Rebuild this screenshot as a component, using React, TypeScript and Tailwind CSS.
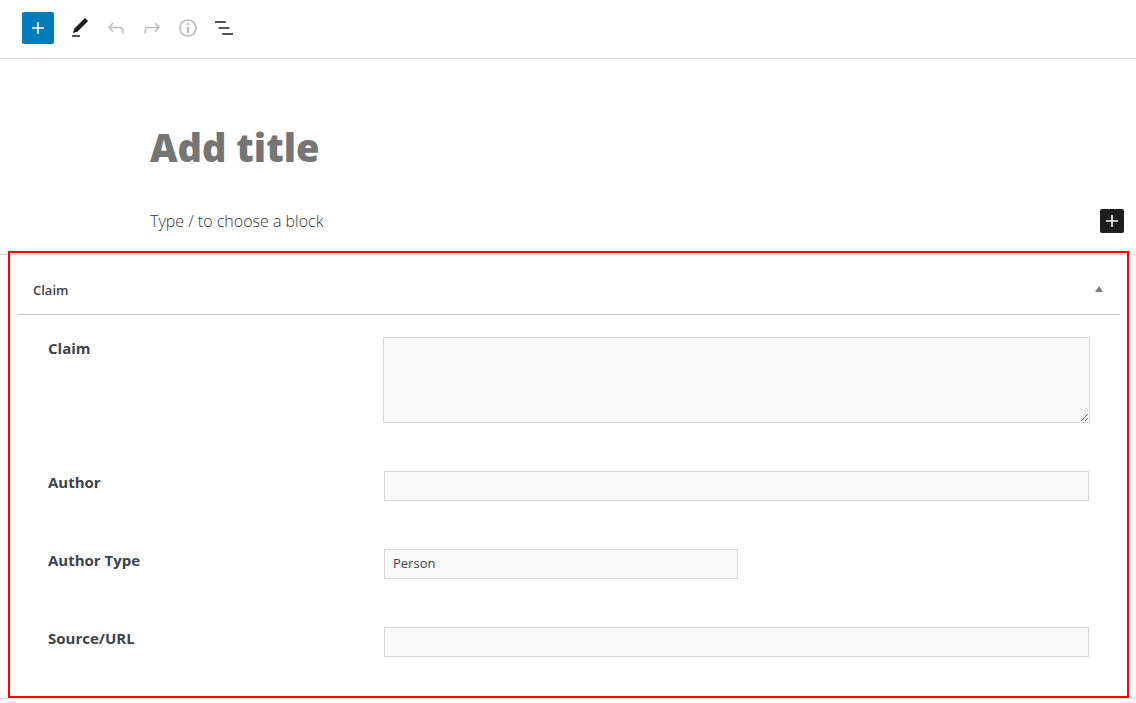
import type { ReactNode } from "react";

function Icon({ d }: { d: string }) {
  return (
    <svg viewBox="0 0 24 24" className="size-6 shrink-0 fill-current" aria-hidden="true">
      <path d={d} />
    </svg>
  );
}

const icons = {
  plus: "M18 11.2h-5.2V6h-1.6v5.2H6v1.6h5.2V18h1.6v-5.2H18z",
  edit: "M20.1 5.1L16.9 2 6.2 12.7l-1.3 4.4 4.5-1.3L20.1 5.1zM4 20.8h8v-1.5H4v1.5z",
  undo: "M18.3 11.7c-.6-.6-1.4-.9-2.3-.9H6.7l2.9-3.3-1.1-1-4.5 5L8.5 16l1-1-2.7-2.7H16c.5 0 .9.2 1.3.5 1 1 1 3.4 1 4.5v.3h1.5v-.2c0-1.5 0-4.3-1.5-5.7z",
  redo: "M15.6 6.5l-1.1 1 2.9 3.3H8c-.9 0-1.7.3-2.3.9-1.4 1.5-1.4 4.2-1.4 5.6v.2h1.5v-.3c0-1.1 0-3.5 1-4.5.3-.3.7-.5 1.3-.5h9.2L14.5 15l1.1 1.1 4.6-4.6-4.6-5z",
  info: "M12 3.2c-4.8 0-8.8 3.9-8.8 8.8 0 4.8 3.9 8.8 8.8 8.8 4.8 0 8.8-3.9 8.8-8.8 0-4.8-4-8.8-8.8-8.8zm0 16c-4 0-7.2-3.3-7.2-7.2C4.8 8 8 4.8 12 4.8s7.2 3.3 7.2 7.2c0 4-3.2 7.2-7.2 7.2zM11 17h2v-6h-2v6zm0-8h2V7h-2v2z",
  outline: "M13.8 5.2H3v1.5h10.8V5.2zm-3.6 12v1.5H21v-1.5H10.2zm7.2-6H6.6v1.5h10.8v-1.5z",
};

const tools = [
  { name: "Tools", d: icons.edit, muted: false },
  { name: "Undo", d: icons.undo, muted: true },
  { name: "Redo", d: icons.redo, muted: true },
  { name: "Details", d: icons.info, muted: true },
  { name: "Outline", d: icons.outline, muted: false },
];

function Field({ id, label, children }: { id: string; label: string; children: ReactNode }) {
  return (
    <div className="flex items-start py-6">
      <label htmlFor={id} className="w-[335px] shrink-0 text-[15px] leading-[22px] font-bold">
        {label}
      </label>
      <div className="flex min-w-0 flex-1">{children}</div>
    </div>
  );
}

const box = "border border-[#d5d5d5] bg-[#f9f9f9] outline-none";

export default function App() {
  return (
    <div className="bg-white font-['Segoe_UI','Open_Sans','Noto_Sans',sans-serif] text-[#3c434a]">
      <header className="flex items-center gap-2 border-b border-[#e0e0e0] px-[22px] pt-3 pb-[14px]">
        <button
          type="button"
          aria-label="Add block"
          className="flex size-8 items-center justify-center rounded-xs bg-[#007cba] text-white"
        >
          <Icon d={icons.plus} />
        </button>
        <div className="flex">
          {tools.map((tool) => (
            <button
              key={tool.name}
              type="button"
              aria-label={tool.name}
              disabled={tool.muted}
              className={`flex h-8 w-9 items-center justify-center ${tool.muted ? "text-[#bbbbbb]" : "text-[#1e1e1e]"}`}
            >
              <Icon d={tool.d} />
            </button>
          ))}
        </div>
      </header>

      <main>
        <div className="pt-[60px] pr-3 pb-[21px] pl-[150px]">
          <input
            type="text"
            aria-label="Title"
            placeholder="Add title"
            className="block h-14 w-full text-[38px] font-extrabold outline-none placeholder:text-[#757575] placeholder:opacity-100"
          />
          <div className="mt-[34px] flex h-6 items-center justify-between">
            <input
              type="text"
              aria-label="Block content"
              placeholder="Type / to choose a block"
              className="h-6 min-w-0 flex-1 text-base font-light outline-none placeholder:text-[#333333] placeholder:opacity-100"
            />
            <button
              type="button"
              aria-label="Insert block"
              className="flex size-6 items-center justify-center rounded-xs bg-[#1e1e1e] text-white"
            >
              <Icon d={icons.plus} />
            </button>
          </div>
        </div>

        <section className="relative border-y border-[#dddddd] pr-4 pl-[18px]">
          <div className="pointer-events-none absolute -top-1 right-[7px] bottom-0 left-2 border-2 border-[#fe0000]" />
          <div className="flex items-center justify-between border-b border-[#c3c4c7] pt-[25px] pr-[17px] pb-[14px] pl-[15px]">
            <h2 className="text-[13px] leading-5 font-semibold">Claim</h2>
            <button type="button" aria-label="Toggle panel" className="flex h-4 w-5 items-start justify-end pt-1 text-[#787c82]">
              <svg viewBox="0 0 8 6" className="h-[6px] w-2 fill-current" aria-hidden="true">
                <path d="M4 0L8 6H0z" />
              </svg>
            </button>
          </div>
          <form className="-mt-0.5 pr-[30px] pb-[17px] pl-[30px]">
            <Field id="claim" label="Claim">
              <textarea id="claim" className={`${box} h-[86px] w-full resize-y px-2 py-1`} />
            </Field>
            <Field id="author" label="Author">
              <input id="author" type="text" className={`${box} mx-px h-[30px] w-full px-2`} />
            </Field>
            <Field id="author-type" label="Author Type">
              <select id="author-type" className={`${box} ml-px h-[30px] w-1/2 appearance-none px-2 text-[13px]`}>
                <option>Person</option>
              </select>
            </Field>
            <Field id="source" label="Source/URL">
              <input id="source" type="text" className={`${box} mx-px h-[30px] w-full px-2`} />
            </Field>
          </form>
        </section>
      </main>
    </div>
  );
}
